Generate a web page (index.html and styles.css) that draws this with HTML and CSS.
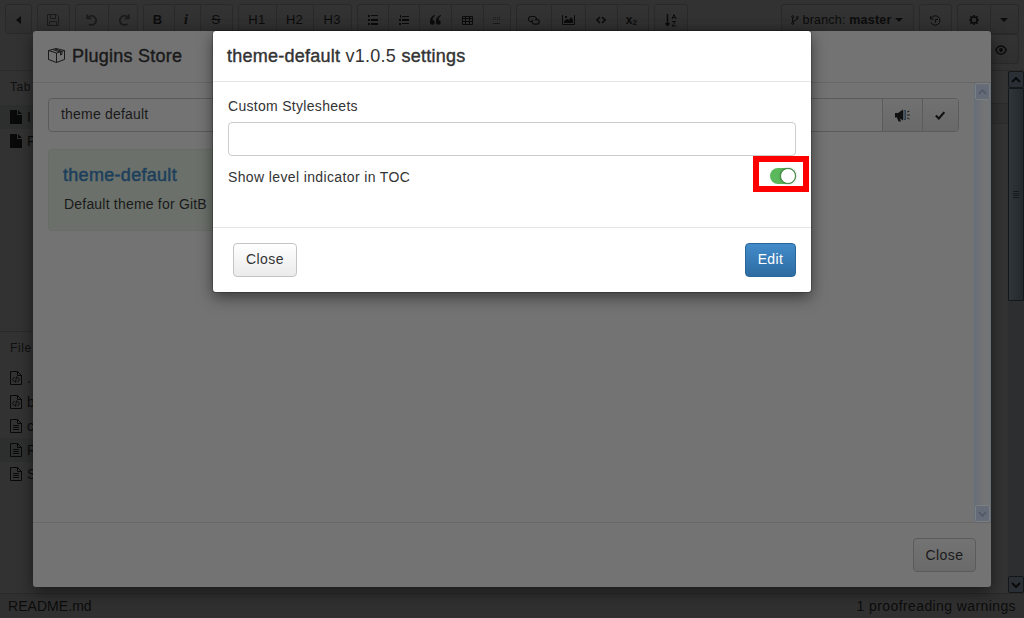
FILE: index.html
```html
<!DOCTYPE html>
<html lang="en">
<head>
<meta charset="utf-8">
<title>theme-default settings</title>
<link rel="stylesheet" href="styles.css">
</head>
<body>
<svg class="defs" width="0" height="0">
  <symbol id="md" viewBox="0 0 12 14"><path d="M.5.5h7l4 4v9H.5zM7.5.5v4h4M3 6.5h6M3 8.5h6M3 10.5h6" fill="none" stroke="currentColor"/></symbol>
  <symbol id="code" viewBox="0 0 12 14"><path d="M.5.5h7l4 4v9H.5zM7.5.5v4h4M4.5 6L2.5 8.5l2 2.5M7.5 6l2 2.5-2 2.5M6.5 5.5l-1 6" fill="none" stroke="currentColor"/></symbol>
  <symbol id="file" viewBox="0 0 12 14"><path d="M0 0h7v5h5v9H0zM8 0l4 4H8z" fill="currentColor"/></symbol>
  <symbol id="up" viewBox="0 0 10 6"><path d="M1 5l4-4 4 4" fill="none" stroke="currentColor" stroke-width="2"/></symbol>
  <symbol id="down" viewBox="0 0 10 6"><path d="M1 1l4 4 4-4" fill="none" stroke="currentColor" stroke-width="2"/></symbol>
</svg>
<div class="app">
  <header class="toolbar">
    <div class="bar">
      <div class="group back"><span class="btn"><svg width="5" height="8"><path d="M5 0v8L0 4z" fill="currentColor"/></svg></span></div>
      <div class="group save dim"><span class="btn"><svg width="12" height="12" fill="none" stroke="currentColor"><path d="M.5.5h9l2 2v9H.5zM3.5.5v4h5v-4M2.5 11.5v-4h7v4"/></svg></span></div>
      <div class="group undo dim"><span class="btn w32"><svg width="12" height="12" fill="none" stroke="currentColor" stroke-width="1.7"><path d="M1.2.5v4h4M1.5 4.2A4.6 4.6 0 1 1 3 10.2"/></svg></span><span class="btn w31"><svg width="12" height="12" fill="none" stroke="currentColor" stroke-width="1.7"><path d="M10.8.5v4h-4M10.5 4.2A4.6 4.6 0 1 0 9.5 9.8"/></svg></span></div>
      <div class="group style"><span class="btn w30 bold">B</span><span class="btn w26 ital">i</span><span class="btn grow strike">S</span></div>
      <div class="group heads"><span class="btn grow">H1</span><span class="btn grow">H2</span><span class="btn grow">H3</span></div>
      <div class="group lists">
        <span class="btn w30"><svg width="10" height="10" fill="currentColor"><path d="M0 0h2v2H0zM0 4h2v2H0zM0 8h2v2H0zM3 0h7v1H3zM3 4h7v2H3zM3 8h7v2H3z"/></svg></span>
        <span class="btn w31"><svg width="10" height="10" fill="currentColor"><path d="M1 0h1v3H1zM0 4h2v2H0zM0 8h2v2H0zM3 1h7v1H3zM3 4h7v2H3zM3 8h7v1H3z"/></svg></span>
        <span class="btn w32"><svg width="11" height="10" fill="currentColor"><path d="M5 0C1 1 0 4 0 7.5A2.4 2.4 0 1 0 2.5 5C2.6 3 3.4 1.7 5 1zM11 0C7 1 6 4 6 7.5A2.4 2.4 0 1 0 8.5 5C8.6 3 9.4 1.7 11 1z"/></svg></span>
        <span class="btn w32"><svg width="11" height="9" fill="none" stroke="currentColor"><path d="M.5.5h10v8H.5zM0 2.5h11M0 5.5h11M3.5 1v8M7.5 1v8"/></svg></span>
        <span class="btn grow dim"><svg width="9" height="8" fill="none" stroke="currentColor"><path d="M1 1.500h8M1 3.500h8" stroke-dasharray="1 1"/><path d="M1 7.500h7"/></svg></span>
      </div>
      <div class="group media">
        <span class="btn w34"><svg width="12" height="10" fill="none" stroke="currentColor" stroke-width="1.1"><path d="M4 6.500H3a2.500 2.500 0 0 1 0-5h3a2.500 2.500 0 0 1 2 4M7 4.500h2a2.300 2.300 0 0 1 0 4.600H6A2.300 2.300 0 0 1 5 5"/></svg></span>
        <span class="btn w34"><svg width="13" height="10"><path d="M.5 0v9.500h12V0" fill="none" stroke="currentColor"/><path d="M2 8V6l3-2 2 1 2-3 2 3v3zM3 1h2v2H3z" fill="currentColor"/></svg></span>
        <span class="btn w32"><svg width="10" height="8" fill="none" stroke="currentColor" stroke-width="1.600"><path d="M4 1L1 4l3 3M6 1l3 3-3 3"/></svg></span>
        <span class="btn grow bold sub">x<sub>2</sub></span>
      </div>
      <div class="group sort"><span class="btn"><svg width="12" height="13" fill="none" stroke="currentColor"><path d="M2.500 0v11M.5 9l2 2.500 2-2.500" stroke-width="1.500"/><path d="M7 5l2-4.500L11 5M7.500 3.500h3M7 7.500h3.500L7 12h4"/></svg></span></div>
      <div class="spacer"></div>
      <div class="group branch"><span class="btn"><svg width="8" height="10" fill="none" stroke="currentColor"><circle cx="1.700" cy="1.700" r="1"/><circle cx="6.300" cy="2.500" r="1"/><circle cx="1.700" cy="8.300" r="1"/><path d="M1.700 3v4c0-2 4.600-.8 4.600-3.500"/></svg><span class="blabel">branch: <b>master</b></span><i class="caret"></i></span></div>
      <div class="group hist"><span class="btn"><svg width="11" height="11" fill="none" stroke="currentColor"><path d="M1 3.500A4.700 4.700 0 1 1 1 7.500M.5 1v3h3M5.500 7.500V4.500h2.500"/></svg></span></div>
      <div class="group gear"><span class="btn grow"><svg width="10" height="10" fill="none" stroke="currentColor"><circle cx="5" cy="5" r="3" stroke-width="1.600"/><path d="M5 0v2M5 8v2M0 5h2M8 5h2M1.400 1.400l1.300 1.300M7.300 7.300l1.300 1.300M1.400 8.600l1.300-1.300M7.300 2.700l1.300-1.300" stroke-width="1.700"/></svg></span><span class="btn w28"><i class="caret"></i></span></div>
    </div>
    <div class="bar second"><div class="spacer"></div><div class="group eye"><span class="btn"><svg width="12" height="10"><path d="M.8 5C3-.5 9-.5 11.200 5 9 10.500 3 10.500.8 5z" fill="none" stroke="currentColor" stroke-width="1.500"/><circle cx="6" cy="5" r="2" fill="currentColor"/></svg></span></div></div>
  </header>
  <main class="work">
    <aside class="side">
      <section class="toc">
        <h4>Tab</h4>
        <div class="item active"><svg class="fi"><use href="#file"/></svg>I</div>
        <div class="item"><svg class="fi"><use href="#file"/></svg>F</div>
      </section>
      <section class="files">
        <h4>File</h4>
        <div class="item"><svg class="fi"><use href="#code"/></svg>.</div>
        <div class="item"><svg class="fi"><use href="#code"/></svg>b</div>
        <div class="item"><svg class="fi"><use href="#md"/></svg>c</div>
        <div class="item active"><svg class="fi"><use href="#md"/></svg>R</div>
        <div class="item"><svg class="fi"><use href="#md"/></svg>S</div>
      </section>
    </aside>
    <div class="editor"><div class="line"></div></div>
    <div class="scroll">
      <span class="arrow"><svg width="10" height="6"><use href="#up"/></svg></span>
      <span class="thumb"><i></i></span>
      <span class="track"></span>
      <span class="arrow"><svg width="10" height="6"><use href="#down"/></svg></span>
    </div>
  </main>
  <footer class="status"><span class="name">README.md</span><span class="warn">1 proofreading warnings</span></footer>
</div>

<section class="modal store">
  <header class="mhead"><svg width="17" height="15" fill="none" stroke="currentColor"><path d="M.5 2.500L8.500 5v9.500l-8-3zM8.500 5l8-2.500v9l-8 3M.5 2.500L8 .5l8.500 2M4.500 1.500l8 2.500v3l1.500-.7V3.500L7 1"/></svg><h2>Plugins Store</h2></header>
  <div class="sbody">
    <div class="content">
      <div class="search"><span class="field">theme default</span><span class="add ad1"><svg width="15" height="13"><path d="M0 4h3l5-3.500v11L5 9.500l1 3H3.500L2 8.500H0z" fill="#111"/><path d="M9 1.500h1.500v9H9z" fill="none" stroke="#2b3c4d"/><path d="M12 3l2.500-1M12 6h3M12 9l2.500 1" stroke="#222"/></svg></span><span class="add ad2"><svg width="10" height="9"><path d="M.8 4.500l3 3L9.300 1.200" fill="none" stroke="#111" stroke-width="2"/></svg></span></div>
      <div class="plugin"><h3>theme-default</h3><p>Default theme for GitB</p></div>
    </div>
    <div class="inner"><span class="arr"><svg width="9" height="6"><use href="#up"/></svg></span><span class="track"></span><span class="arr"><svg width="9" height="6"><use href="#down"/></svg></span></div>
  </div>
  <footer class="sfoot"><button class="button muted">Close</button></footer>
</section>

<section class="modal settings">
  <header class="mhead"><h2>theme-default <span class="ver">v1.0.5</span> settings</h2></header>
  <div class="form">
    <label>Custom Stylesheets</label>
    <div class="input"></div>
    <div class="row"><label>Show level indicator in TOC</label><span class="hl"><span class="toggle"><i></i></span></span></div>
  </div>
  <footer class="mfoot"><button class="button light">Close</button><button class="button primary">Edit</button></footer>
</section>
</body>
</html>
```
FILE: styles.css
```css
* { box-sizing: border-box; }
body { margin: 0; width: 1024px; height: 618px; overflow: hidden; font: 14px/20px "Liberation Sans", Arial, sans-serif; letter-spacing: .3px; color: #333; background: #333; }
svg { display: block; flex: none; }
h2, h3, h4, p { margin: 0; }
.defs { position: absolute; }
.app { display: flex; flex-direction: column; height: 618px; color: #0c0c0c; }
.toolbar { height: 71px; padding: 4px 5px 0; border-bottom: 1px solid #2b2b2b; background: #323232; }
.bar { display: flex; gap: 5px; height: 30px; }
.group { display: flex; border: 1px solid #292929; border-radius: 3px; background: linear-gradient(#333, #2f2f2f); }
.btn { display: flex; align-items: center; justify-content: center; flex: none; padding: 2px 1px 0 0; border-left: 1px solid #292929; }
.btn:first-child { border-left: 0; }
.group .grow, .group .btn:only-child { flex: 1; }
.dim { color: #1a1a1a; }
.back { width: 27px; }
.save { width: 33px; }
.undo { width: 63px; }
.style { width: 90px; }
.heads { width: 114px; }
.lists { width: 154px; }
.media { width: 133px; }
.sort { width: 34px; }
.spacer { flex: 1; }
.branch { width: 133px; }
.branch .btn { gap: 4px; letter-spacing: .2px; font-size: 12.5px; }
.hist { width: 33px; }
.gear { width: 62px; }
.eye { width: 35px; }
.w26 { width: 26px; } .w28 { width: 28px; } .w30 { width: 30px; } .w31 { width: 31px; } .w32 { width: 32px; } .w34 { width: 34px; }
.bold { padding-right: 3px; font-weight: bold; font-size: 13px; }
.ital { padding-right: 3px; font: italic bold 14px "Liberation Serif", serif; }
.strike { font-size: 13px; text-decoration: line-through; }
.heads { font-size: 13px; }
.heads .btn { padding-top: 1px; }
.sub { font-size: 12px; }
.sub sub { font-size: 8px; align-self: flex-end; }
.caret { border: 4px solid transparent; border-top-color: currentColor; border-bottom: 0; }
.work { display: flex; flex: 1; min-height: 0; }
.side { width: 240px; background: #323232; }
.toc { height: 260px; }
.files { border-top: 1px solid #292929; }
h4 { height: 34px; padding: 6px 10px 0; font-size: 12px; font-weight: normal; letter-spacing: .6px; color: #101010; }
.item { display: flex; align-items: center; height: 24px; gap: 5px; padding-left: 10px; }
.active { background: #2c2f2e; }
.fi { width: 12px; height: 14px; color: #090909; }
.editor { flex: 1; padding-top: 32px; background: #333; }
.line { height: 21px; border: 1px solid #2b2b2b; border-width: 1px 0; background: #303030; }
.scroll { display: flex; flex-direction: column; width: 16px; background: #2d2e30; }
.arrow { display: flex; align-items: center; justify-content: center; height: 17px; border: 1px solid #15181b; border-radius: 2px; background: #2a2f35; color: #0a0a0c; }
.thumb { display: flex; align-items: center; justify-content: center; height: 213px; border: 1px solid #15181b; border-radius: 1px; background: linear-gradient(90deg, #30353a, #24292e); }
.thumb i { width: 6px; height: 7px; background: repeating-linear-gradient(#15191d 0 1px, #2d3237 1px 2px); }
.track { flex: 1; }
.status { display: flex; justify-content: space-between; height: 25px; padding: 2px 8px; border-top: 1px solid #292929; background: #303030; }
.name { letter-spacing: .05px; }
.warn { letter-spacing: .4px; }

.modal { position: absolute; display: flex; flex-direction: column; border-radius: 3px; }
.modal h2 { font-size: 18px; line-height: 20px; font-weight: normal; letter-spacing: .25px; -webkit-text-stroke: .4px; }
.modal .ver { -webkit-text-stroke: 0; }
.store { left: 33px; top: 31px; width: 958px; height: 556px; background: #737373; color: #1a1a1a; box-shadow: 0 5px 15px rgba(0,0,0,.5); }
.mhead { display: flex; align-items: center; gap: 7px; height: 52px; padding: 0 15px 2px; border-bottom: 1px solid #676767; }
.sbody { display: flex; flex: 1; }
.content { flex: 1; padding: 15px; letter-spacing: .2px; }
.search { display: flex; height: 34px; border: 1px solid #5b5b5b; border-radius: 4px; }
.field { flex: 1; padding: 5px 12px; }
.add { display: flex; align-items: center; justify-content: center; padding-right: 1px; border-left: 1px solid #5b5b5b; background: linear-gradient(#717171, #696969); }
.ad1 { width: 40px; } .ad2 { width: 36px; border-radius: 0 3px 3px 0; }
.plugin { width: 440px; height: 82px; margin-top: 17px; padding: 15px 15px 15px 14px; border: 1px solid #676c66; border-radius: 4px; background: #6b716a; }
.plugin h3 { font-size: 18px; line-height: 20px; font-weight: normal; color: #1d3f5c; -webkit-text-stroke: .5px; letter-spacing: .3px; }
.plugin p { margin-top: 9px; padding-left: 1px; letter-spacing: .2px; }
.inner { display: flex; flex-direction: column; width: 17px; border-left: 1px solid #66707a; border-right: 1px solid #66707a; background: linear-gradient(90deg, #696e77, #737475 60%); color: #505966; }
.arr { display: flex; align-items: center; justify-content: center; height: 17px; border: 1px solid #7a7f83; border-radius: 2px; background: #656c78; }
.sfoot { display: flex; justify-content: flex-end; height: 65px; padding: 15px; border-top: 1px solid #676767; }
.button { height: 34px; padding: 0 0 2px; border: 1px solid #c4c4c4; border-radius: 4px; font: inherit; letter-spacing: .4px; color: #333; }
.muted { width: 63px; padding-bottom: 0; border-color: #5b5b5b; background: linear-gradient(#737373, #6a6a6a); color: #1a1a1a; }
.light { width: 64px; background: linear-gradient(#fff, #ebebeb); }
.primary { width: 51px; border-color: #2b669a; background: linear-gradient(#428bca, #2d6ca2); color: #fff; }

.settings { left: 213px; top: 31px; width: 598px; height: 261px; background: #fff; box-shadow: 0 5px 15px rgba(0,0,0,.5), 0 0 0 1px rgba(0,0,0,.2); }
.settings .mhead { height: 51px; padding: 0 14px 1px; border-color: #e5e5e5; }
.form { display: flex; flex-direction: column; flex: 1; padding: 14px 2px 0 15px; }
.input { width: 568px; height: 34px; margin-top: 6px; border: 1px solid #ccc; border-radius: 4px; }
.row { display: flex; justify-content: space-between; }
.row label { padding-top: 11px; letter-spacing: .37px; }
.hl { display: flex; width: 56px; height: 36px; padding: 6px 6px 0 11px; border: 6px solid #f00; }
.toggle { display: flex; justify-content: flex-end; width: 26px; height: 16px; border-radius: 8px; background: #5cb85c; }
.toggle i { width: 16px; height: 16px; border: 1px solid #3f8a42; border-radius: 50%; background: #fff; box-shadow: 0 0 2px rgba(0,0,0,.35); }
.mfoot { display: flex; justify-content: space-between; height: 65px; padding: 15px 15px 0 20px; border-top: 1px solid #e5e5e5; }
```
